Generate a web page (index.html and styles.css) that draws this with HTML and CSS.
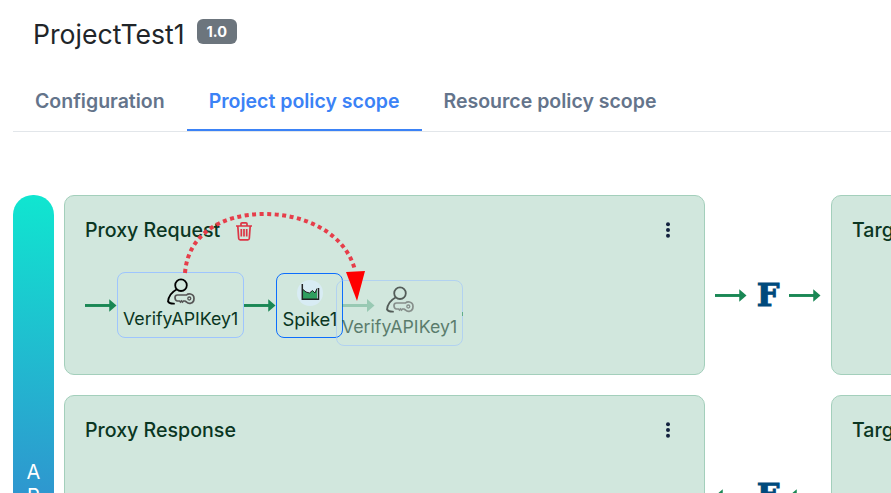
FILE: index.html
```html
<!DOCTYPE html>
<html lang="en">
<head>
<meta charset="utf-8">
<title>ProjectTest1</title>
<link rel="stylesheet" href="styles.css">
</head>
<body>
<svg class="defs" width="0" height="0" aria-hidden="true">
  <defs>
    <symbol id="policy-key" viewBox="0 0 28 28">
      <circle cx="14" cy="7.2" r="5.8" fill="none" stroke="#000" stroke-width="1.8"/>
      <path d="M9.500 11.500C5 14 1.500 18.500 1 23.500c1 1.600 3.500 2.300 6 2.200" fill="none" stroke="#000" stroke-width="1.800" stroke-linecap="round"/>
      <path d="M8 19.500c0-1.500 1-2.500 2.500-2.500h9c1-1 2.500-1.300 4-1 2 .4 3.500 2 3.500 4.500s-1.500 4.300-3.500 4.800c-1.500.3-3-.2-4-1.300l-1.500-1h-1.500l-1 1-1-1-1 1-1-1H10.500C9 23 8 21.500 8 19.500z" fill="none" stroke="#555" stroke-width="1.700"/>
      <circle cx="22.300" cy="20.500" r="1.500" fill="none" stroke="#555" stroke-width="1.300"/>
    </symbol>
    <symbol id="flow-right" viewBox="0 0 33 14">
      <path d="M0 7.500h26" stroke="#198754" stroke-width="3"/>
      <path d="M25 1l7.500 6.500L25 14z" fill="#198754"/>
    </symbol>
    <symbol id="flow-left" viewBox="0 0 33 14">
      <path d="M33 7.500H7" stroke="#198754" stroke-width="3"/>
      <path d="M8 1L.5 7.500 8 14z" fill="#198754"/>
    </symbol>
  </defs>
</svg>

<header class="title-row">
  <h1 class="title">ProjectTest1</h1>
  <span class="version">1.0</span>
</header>

<nav class="tabs">
  <a class="tab">Configuration</a>
  <a class="tab tab-active">Project policy scope</a>
  <a class="tab">Resource policy scope</a>
</nav>

<main class="canvas">
  <aside class="rail"><span>A</span><span>P</span><span>I</span></aside>

  <div class="rows">
    <section class="row">
      <div class="panel panel-proxy">
        <div class="panel-head">
          <h2 class="panel-title">Proxy Request</h2>
          <svg class="trash" viewBox="0 0 20 20" width="20" height="20">
            <path d="M2 5h16M7 4.500V2.800c0-.6.4-1 1-1h4c.6 0 1 .4 1 1v1.700M3.800 5l.9 12.500c.1.800.6 1.300 1.400 1.300h7.800c.8 0 1.300-.5 1.400-1.300L16.200 5M7.300 8v7.500M10 8v7.500M12.700 8v7.500" fill="none" stroke="#dc3545" stroke-width="1.700"/>
          </svg>
          <svg class="kebab" viewBox="0 0 4 16" width="4" height="16">
            <circle cx="2" cy="2.300" r="2" fill="#14233f"/><circle cx="2" cy="8" r="2" fill="#14233f"/><circle cx="2" cy="13.700" r="2" fill="#14233f"/>
          </svg>
        </div>
        <div class="flow">
          <svg class="arrow"><use href="#flow-right"/></svg>
          <div class="node">
            <svg class="node-icon"><use href="#policy-key"/></svg>
            <span class="node-label">VerifyAPIKey1</span>
          </div>
          <svg class="arrow"><use href="#flow-right"/></svg>
          <div class="node node-selected">
            <svg class="node-icon" viewBox="0 0 28 28">
              <circle cx="14" cy="14" r="13" fill="#d8ecf4"/>
              <path d="M7 20V10.500l3 2.500 3.500 1 3-2.500 2.500 2.500 2-4.500V20z" fill="#2f9e5f"/>
              <path d="M6.300 5V20.300H22.500V9" fill="none" stroke="#222" stroke-width="1.500"/>
              <path d="M7 10.500l3 2.500 3.500 1 3-2.500 2.500 2.500 2-4.500" fill="none" stroke="#222" stroke-width="1"/>
            </svg>
            <span class="node-label">Spike1</span>
          </div>
        </div>
      </div>
      <div class="connector">
        <svg class="arrow"><use href="#flow-right"/></svg>
        <span class="fault">F</span>
        <svg class="arrow"><use href="#flow-right"/></svg>
      </div>
      <div class="panel panel-target">
        <h2 class="panel-title">Target Endpoint</h2>
      </div>
    </section>

    <section class="row">
      <div class="panel panel-proxy">
        <div class="panel-head">
          <h2 class="panel-title">Proxy Response</h2>
          <svg class="kebab" viewBox="0 0 4 16" width="4" height="16">
            <circle cx="2" cy="2.300" r="2" fill="#14233f"/><circle cx="2" cy="8" r="2" fill="#14233f"/><circle cx="2" cy="13.700" r="2" fill="#14233f"/>
          </svg>
        </div>
      </div>
      <div class="connector">
        <svg class="arrow"><use href="#flow-left"/></svg>
        <span class="fault">F</span>
        <svg class="arrow"><use href="#flow-left"/></svg>
      </div>
      <div class="panel panel-target">
        <h2 class="panel-title">Target Endpoint</h2>
      </div>
    </section>
  </div>

  <!-- Drag preview: floats over the request flow -->
  <div class="ghost">
    <svg class="node-icon"><use href="#policy-key"/></svg>
    <span class="node-label">VerifyAPIKey1</span>
  </div>
  <svg class="ghost-arrow"><use href="#flow-right"/></svg>
  <svg class="drag-arc" viewBox="0 0 200 110" width="200" height="110">
    <path d="M5 78C8 40 40 19 85 19C125 19 165 38 175 75" fill="none" stroke="#e63e4a" stroke-width="4" stroke-dasharray="4 3.500"/>
    <path d="M166 77l19-1-8 30z" fill="#ff0000"/>
  </svg>
</main>
</body>
</html>
```
FILE: styles.css
```css
html, body {
  margin: 0;
  height: 493px;
  overflow: hidden;
  background: #fff;
  font-family: Inter, "Liberation Sans", sans-serif;
  color: #212529;
}

.defs { position: absolute; }

.title-row {
  display: flex;
  align-items: center;
  gap: 12px;
  height: 67px;
  padding-left: 33px;
}

.title {
  margin: 0;
  font-size: 26.6px;
  font-weight: 400;
  line-height: 34px;
}

.version {
  padding: 5px 10px;
  margin-top: -4px;
  border-radius: 6px;
  background: #6c757d;
  color: #fff;
  font-size: 14.5px;
  font-weight: 700;
  line-height: 15px;
}

.tabs {
  display: flex;
  margin: 0 0 0 13px;
  height: 65px;
  box-sizing: border-box;
  border-bottom: 1px solid #e2e6ea;
}

.tab {
  padding: 21px 22px 0;
  font-size: 19.5px;
  font-weight: 600;
  line-height: 26px;
  color: #64748b;
  white-space: nowrap;
}

.tab-active {
  height: 64px;
  box-sizing: border-box;
  border-bottom: 2px solid #3b82f6;
  color: #3b82f6;
}

.canvas {
  position: relative;
  display: flex;
  gap: 10px;
  margin: 63px 0 0 13px;
}

.rail {
  display: flex;
  flex: none;
  flex-direction: column;
  align-items: center;
  box-sizing: border-box;
  width: 41px;
  height: 400px;
  padding-top: 265px;
  border-radius: 20px 20px 0 0;
  background: linear-gradient(184deg, #10e6d0 0%, #2f95cf 76%);
  color: #fff;
  font-size: 20px;
  line-height: 24px;
}

.rows {
  display: flex;
  flex-direction: column;
  gap: 20px;
}

.row {
  display: flex;
  height: 180px;
}

.panel {
  flex: none;
  box-sizing: border-box;
  height: 180px;
  border: 1px solid #a3cfbb;
  border-radius: 10px;
  background: #d1e7dd;
}

.panel-proxy {
  width: 641px;
  padding: 21px 20px;
}

.panel-target {
  width: 300px;
  padding: 21px 20px;
}

.panel-head {
  display: flex;
  align-items: center;
  gap: 14px;
  height: 27px;
}

.panel-title {
  margin: 0;
  font-size: 19.6px;
  font-weight: 500;
  line-height: 27px;
  color: #0a3622;
  white-space: nowrap;
}

.trash { flex: none; }

.kebab {
  flex: none;
  margin: -2px 14px 0 auto;
}

.flow {
  display: flex;
  align-items: flex-start;
  margin-top: 28px;
}

.arrow {
  flex: none;
  width: 32px;
  height: 14px;
  margin-top: 26px;
}

.node {
  display: flex;
  flex: none;
  flex-direction: column;
  align-items: center;
  box-sizing: border-box;
  height: 66px;
  padding: 5px 5px 0;
  border: 1px solid #9ec5fe;
  border-radius: 8px;
}

.node-selected {
  width: 67px;
  height: 65px;
  margin-top: 1px;
  border-color: #0d6efd;
}

.node-selected .node-label {
  margin-top: -1px;
  font-size: 18.4px;
}

.node-icon {
  flex: none;
  width: 28px;
  height: 28px;
}

.node-label {
  font-size: 17.8px;
  line-height: 26px;
  color: #0a3622;
  white-space: nowrap;
}

.connector {
  display: flex;
  flex: none;
  align-items: center;
  gap: 9px;
  box-sizing: border-box;
  width: 126px;
  height: 30px;
  margin-top: 85px;
  padding-left: 10px;
}

.connector .arrow { margin-top: 0; }

.fault {
  width: 24px;
  font-family: "DejaVu Serif", serif;
  font-size: 32px;
  font-weight: 700;
  line-height: 30px;
  color: #004a7c;
  text-align: center;
  -webkit-text-stroke: 1px #004a7c;
}

.ghost {
  position: absolute;
  left: 323px;
  top: 85px;
  display: flex;
  flex-direction: column;
  align-items: center;
  box-sizing: border-box;
  width: 127px;
  height: 66px;
  padding-top: 5px;
  border: 1px solid #9ec5fe;
  border-radius: 8px;
  opacity: .6;
}

.ghost::after {
  content: "";
  position: absolute;
  right: -1px;
  top: 31px;
  width: 1px;
  height: 4px;
  background: #198754;
}

.ghost-arrow {
  position: absolute;
  left: 329px;
  top: 103px;
  width: 33px;
  height: 14px;
  opacity: .3;
}

.drag-arc {
  position: absolute;
  left: 167px;
  top: 0;
}
```
